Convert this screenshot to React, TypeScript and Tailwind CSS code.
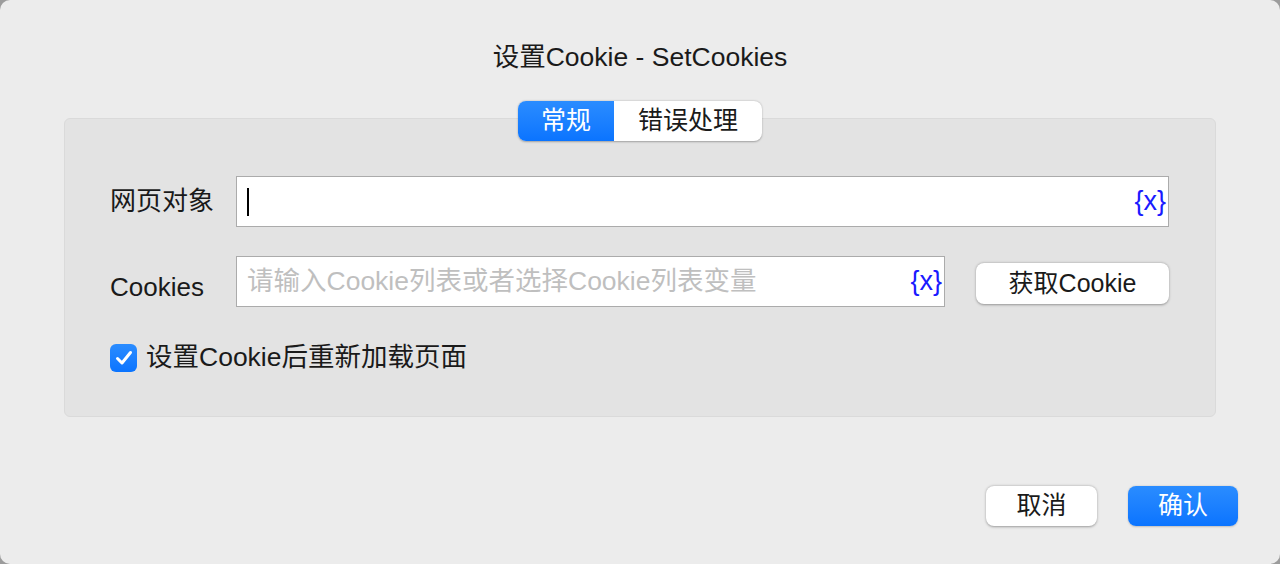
import React from "react";

const font = { fontFamily: '"Liberation Sans", "Noto Sans CJK SC", sans-serif' };

function VarTag() {
  return <span className="text-[27px] leading-none text-[#1a1aff]">{"{x}"}</span>;
}

export default function App() {
  return (
    <div className="h-[564px] w-[1280px] bg-[#9c9c9c]" style={font}>
      <div className="flex h-full w-full flex-col rounded-[10px] bg-[#ececec] text-[#1a1a1a]">
        <div className="flex h-[101px] items-start justify-center pt-[40px] text-[26.5px] leading-[34px]">
          设置Cookie - SetCookies
        </div>

        <div className="mx-[64px] flex flex-col">
          <div className="relative z-10 -mb-[23px] flex justify-center">
            <div className="flex h-[40px] overflow-hidden rounded-[8px] bg-white text-[25px] shadow-[0_0.5px_2px_rgba(0,0,0,0.3)]">
              <div className="flex w-[96px] items-center justify-center bg-gradient-to-b from-[#2a8cff] to-[#0a74ff] text-white">
                常规
              </div>
              <div className="flex w-[148px] items-center justify-center text-[#1a1a1a]">错误处理</div>
            </div>
          </div>

          <div className="flex h-[299px] flex-col rounded-[6px] border border-[#dadada] bg-[#e3e3e3] pl-[45px] pr-[46px] pt-[57px]">
            <div className="flex h-[51px] items-center">
              <div className="w-[126px] text-[26px]">网页对象</div>
              <div className="flex h-[51px] flex-1 items-center border border-[#ababab] bg-white pl-[10px] pr-[2px]">
                <div className="h-[28px] w-[2px] bg-black" />
                <div className="flex-1" />
                <VarTag />
              </div>
            </div>

            <div className="mt-[29px] flex h-[51px] items-center">
              <div className="w-[126px] pt-[12px] text-[26px]">Cookies</div>
              <div className="flex h-[51px] w-[709px] items-center border border-[#ababab] bg-white pl-[10px] pr-[2px]">
                <span className="flex-1 text-[26.5px] text-[#bfbfbf]">请输入Cookie列表或者选择Cookie列表变量</span>
                <VarTag />
              </div>
              <div className="flex-1" />
              <button className="mt-[4px] flex h-[41px] w-[193px] items-center justify-center rounded-[8px] bg-white text-[25px] text-[#1a1a1a] shadow-[0_0.5px_2.5px_rgba(0,0,0,0.35)]">
                获取Cookie
              </button>
            </div>

            <div className="mt-[31px] flex items-center gap-[9px]">
              <div className="flex h-[28px] w-[27px] items-center justify-center rounded-[6px] bg-gradient-to-b from-[#2a8cff] to-[#0a74ff]">
                <svg width="18" height="16" viewBox="0 0 18 16">
                  <path d="M2.5 8.5 L7 13 L15.5 2.5" fill="none" stroke="white" strokeWidth="3" strokeLinecap="round" strokeLinejoin="round" />
                </svg>
              </div>
              <span className="text-[26.5px]">设置Cookie后重新加载页面</span>
            </div>
          </div>
        </div>

        <div className="mt-[69px] flex justify-end gap-[31px] pr-[42px]">
          <button className="flex h-[40px] w-[111px] items-center justify-center rounded-[8px] bg-white text-[25px] text-[#1a1a1a] shadow-[0_0.5px_2.5px_rgba(0,0,0,0.35)]">
            取消
          </button>
          <button className="flex h-[40px] w-[110px] items-center justify-center rounded-[8px] bg-gradient-to-b from-[#2a8cff] to-[#0a74ff] text-[25px] text-white shadow-[0_0.5px_2px_rgba(0,0,0,0.2)]">
            确认
          </button>
        </div>
      </div>
    </div>
  );
}
